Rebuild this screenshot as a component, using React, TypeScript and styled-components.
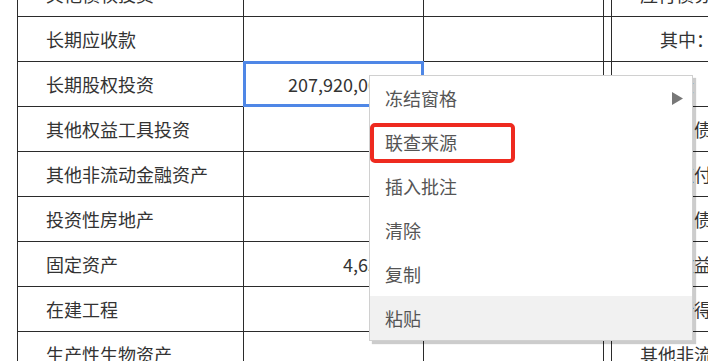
import React from "react";
import styled, { createGlobalStyle } from "styled-components";

const GlobalStyle = createGlobalStyle`
    html, body {
        margin: 0;
        padding: 0;
        background: #fff;
    }
    body {
        font-family: "Noto Sans CJK SC", "Noto Sans", sans-serif;
        overflow: hidden;
    }
`

const Page = styled.div`
    position: relative;
    width: 708px;
    height: 361px;
    overflow: hidden;
    padding-left: 17px;
    box-sizing: border-box;
`

const Sheet = styled.table`
    border-collapse: collapse;
    table-layout: fixed;
    margin-top: -29px;
    width: 800px;
    color: #333;
    font-size: 18px;
`

const Row = styled.tr`
    height: 45px;
`

const Cell = styled.td<{ $align?: "left" | "right"; $indent?: number; $selected?: boolean }>`
    position: relative;
    border: 1px solid #2b2b2b;
    padding: 0;
    padding-left: ${p => (p.$align === "right" ? 0 : 28 + (p.$indent || 0))}px;
    padding-right: ${p => (p.$align === "right" ? 10 : 0)}px;
    text-align: ${p => p.$align || "left"};
    white-space: nowrap;
    overflow: hidden;
    vertical-align: middle;
    line-height: 1;

    ${p => p.$selected && `
        overflow: visible;
        &::after {
            content: "";
            position: absolute;
            left: -1px;
            top: -1px;
            right: -1px;
            bottom: -1px;
            border: 3px solid #4f87e6;
            pointer-events: none;
        }
    `}
`

const GapCell = styled.td`
    border-top: 1px solid #2b2b2b;
    border-bottom: 1px solid #2b2b2b;
    border-left: 1px solid #2b2b2b;
    border-right: 1px solid #2b2b2b;
    padding: 0;
`

const Menu = styled.div`
    position: absolute;
    left: 369px;
    top: 75px;
    width: 322px;
    background: #fff;
    border: 1px solid #d0d0d0;
    box-shadow: 3px 3px 1px rgba(0, 0, 0, 0.2);
    color: #555;
    font-size: 18px;
`

const MenuItem = styled.div<{ $hover?: boolean }>`
    height: 44px;
    display: flex;
    align-items: center;
    justify-content: space-between;
    padding: 0 9px 0 15px;
    background: ${p => (p.$hover ? "#f1f1f1" : "transparent")};
`

const Arrow = styled.svg`
    width: 11px;
    height: 13px;
    fill: #777;
`

const Callout = styled.div`
    position: absolute;
    left: 370px;
    top: 123px;
    width: 145px;
    height: 40px;
    box-sizing: border-box;
    border: 4px solid #ee2a1f;
    border-radius: 5px;
`

type RowData = {
    label: string
    value: string
    right: string
    indent?: number
}

const rows: RowData[] = [
    { label: "其他债权投资", value: "", right: "应付债券" },
    { label: "长期应收款", value: "", right: "其中：优先股", indent: 20 },
    { label: "长期股权投资", value: "207,920,000.00", right: "永续债" },
    { label: "其他权益工具投资", value: "", right: "租赁负债" },
    { label: "其他非流动金融资产", value: "", right: "长期应付款" },
    { label: "投资性房地产", value: "", right: "预计负债" },
    { label: "固定资产", value: "4,656.64", right: "递延收益" },
    { label: "在建工程", value: "", right: "递延所得税负债" },
    { label: "生产性生物资产", value: "", right: "其他非流动负债" },
]

const menuItems = ["冻结窗格", "联查来源", "插入批注", "清除", "复制", "粘贴"]

const App = () => {
    return (
        <>
            <GlobalStyle />
            <Page>
                <Sheet>
                    <colgroup>
                        <col style={{ width: 226 }} />
                        <col style={{ width: 180 }} />
                        <col style={{ width: 180 }} />
                        <col style={{ width: 8 }} />
                        <col style={{ width: 206 }} />
                    </colgroup>
                    <tbody>
                        {rows.map((r, i) =>
                            <Row key={i}>
                                <Cell>{r.label}</Cell>
                                <Cell $align="right" $selected={i === 2}>{r.value}</Cell>
                                <Cell />
                                <GapCell />
                                <Cell $indent={r.indent}>{r.right}</Cell>
                            </Row>
                        )}
                    </tbody>
                </Sheet>

                <Menu>
                    {menuItems.map((m, i) =>
                        <MenuItem key={m} $hover={i === menuItems.length - 1}>
                            {m}
                            {i === 0 &&
                                <Arrow viewBox="0 0 11 13">
                                    <polygon points="0,0 11,6.5 0,13" />
                                </Arrow>
                            }
                        </MenuItem>
                    )}
                </Menu>
                <Callout />
            </Page>
        </>
    )
}

export default App
